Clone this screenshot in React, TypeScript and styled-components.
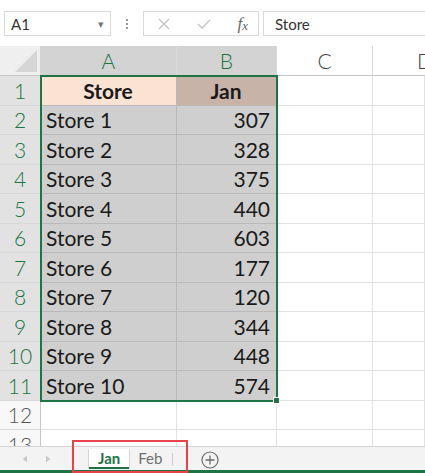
import React from 'react';
import styled, { createGlobalStyle, css } from 'styled-components';

const GlobalStyle = createGlobalStyle`
  html, body { margin: 0; padding: 0; background: #ffffff; }
  body { font-family: Lato, "Liberation Sans", sans-serif; }
`;

const green = '#217346';

const rows: [string, number][] = [
  ['Store 1', 307],
  ['Store 2', 328],
  ['Store 3', 375],
  ['Store 4', 440],
  ['Store 5', 603],
  ['Store 6', 177],
  ['Store 7', 120],
  ['Store 8', 344],
  ['Store 9', 448],
  ['Store 10', 574],
];

const App = () => {
  return (
    <>
      <GlobalStyle />
      <Window>
        <FormulaBar>
          <NameBox>
            <span>A1</span>
            <Caret>▾</Caret>
          </NameBox>
          <Dots>
            <i />
            <i />
            <i />
          </Dots>
          <FxButtons>
            <svg width="14" height="14" viewBox="0 0 14 14">
              <path d="M2 2 L12 12 M12 2 L2 12" stroke="#c4c4c4" strokeWidth="1.4" fill="none" />
            </svg>
            <svg width="16" height="14" viewBox="0 0 16 14">
              <path d="M2 7 L6 11 L14 3" stroke="#c4c4c4" strokeWidth="1.4" fill="none" />
            </svg>
            <Fx>
              f<sub>x</sub>
            </Fx>
          </FxButtons>
          <FormulaInput>Store</FormulaInput>
        </FormulaBar>

        <Sheet>
          <Corner>
            <CornerTriangle />
          </Corner>
          <ColHead selected>A</ColHead>
          <ColHead selected>B</ColHead>
          <ColHead>C</ColHead>
          <ColHead last>D</ColHead>

          <RowHead selected>1</RowHead>
          <Cell tone="peach" bold center>
            Store
          </Cell>
          <Cell tone="brown" bold center>
            Jan
          </Cell>
          <Cell />
          <Cell />

          {rows.map(([name, value], i) => (
            <React.Fragment key={name}>
              <RowHead selected>{i + 2}</RowHead>
              <Cell tone="gray">{name}</Cell>
              <Cell tone="gray" right>
                {value}
              </Cell>
              <Cell />
              <Cell />
            </React.Fragment>
          ))}

          <RowHead>12</RowHead>
          <Cell />
          <Cell />
          <Cell />
          <Cell />
          <RowHead>13</RowHead>
          <Cell />
          <Cell />
          <Cell />
          <Cell />

          <Selection>
            <FillHandle />
          </Selection>
        </Sheet>

        <TabBar>
          <Arrows>
            <svg width="6" height="8" viewBox="0 0 6 8">
              <path d="M5 0.5 L0.8 4 L5 7.5 Z" fill="#c9c9c9" />
            </svg>
            <svg width="6" height="8" viewBox="0 0 6 8">
              <path d="M1 0.5 L5.2 4 L1 7.5 Z" fill="#c9c9c9" />
            </svg>
          </Arrows>
          <Tabs>
            <Tab active>Jan</Tab>
            <Tab>Feb</Tab>
            <TabSep />
          </Tabs>
          <AddSheet>
            <svg width="18" height="18" viewBox="0 0 18 18">
              <circle cx="9" cy="9" r="8" stroke="#6d6d6d" strokeWidth="1.2" fill="none" />
              <path d="M9 4.5 V13.5 M4.5 9 H13.5" stroke="#6d6d6d" strokeWidth="1.3" />
            </svg>
          </AddSheet>
        </TabBar>
        <StatusLine />
      </Window>
    </>
  );
};

export default App;

// Styles
const Window = styled.div`
  width: 425px;
  height: 473px;
  overflow: hidden;
  background: #ffffff;
  display: flex;
  flex-direction: column;
`;

const FormulaBar = styled.div`
  height: 46px;
  box-sizing: border-box;
  padding: 11px 0 0 4px;
  display: flex;
  align-items: flex-start;
  background: #ffffff;
  flex-shrink: 0;
`;

const boxBorder = css`
  box-sizing: border-box;
  height: 25px;
  border: 1px solid #d9d9d9;
  background: #ffffff;
`;

const NameBox = styled.div`
  ${boxBorder};
  width: 107px;
  display: flex;
  align-items: center;
  justify-content: space-between;
  padding: 0 6px 0 6px;
  font-size: 15px;
  color: #333333;
`;

const Caret = styled.span`
  font-size: 11px;
  color: #777777;
`;

const Dots = styled.div`
  width: 32px;
  height: 25px;
  display: flex;
  flex-direction: column;
  align-items: center;
  justify-content: center;
  gap: 2px;

  i {
    width: 2px;
    height: 2px;
    background: #9a9a9a;
    display: block;
  }
`;

const FxButtons = styled.div`
  ${boxBorder};
  width: 116px;
  display: flex;
  align-items: center;
  padding: 0 10px 0 13px;
  justify-content: space-between;
`;

const Fx = styled.span`
  font-family: 'Liberation Serif', serif;
  font-style: italic;
  font-size: 17px;
  color: #666666;
  sub {
    font-size: 13px;
    vertical-align: -1px;
  }
`;

const FormulaInput = styled.div`
  ${boxBorder};
  margin-left: 4px;
  flex: 1;
  border-right: none;
  display: flex;
  align-items: center;
  padding-left: 11px;
  font-size: 15px;
  color: #333333;
`;

const Sheet = styled.div`
  position: relative;
  display: grid;
  grid-template-columns: 41px 136px 100px 96px 52px;
  grid-template-rows: 30px repeat(12, 29.5px) 30px;
  flex: 1;
  overflow: hidden;
`;

const Corner = styled.div`
  background: #efefef;
  border-right: 1px solid #d4d4d4;
  border-bottom: 1px solid #c6c6c6;
  position: relative;
`;

const CornerTriangle = styled.div`
  position: absolute;
  right: 3px;
  bottom: 3px;
  width: 0;
  height: 0;
  border-left: 22px solid transparent;
  border-bottom: 22px solid #d6d6d6;
`;

const ColHead = styled.div<{ selected?: boolean; last?: boolean }>`
  box-sizing: border-box;
  display: flex;
  align-items: center;
  justify-content: center;
  font-size: 21px;
  font-weight: 300;
  border-bottom: 1px solid #c6c6c6;
  border-right: ${(p) => (p.last ? 'none' : '1px solid #d9d9d9')};
  background: ${(p) => (p.selected ? '#d3d3d3' : '#ffffff')};
  color: ${(p) => (p.selected ? green : '#444444')};
  ${(p) =>
    p.last &&
    css`
      justify-content: flex-start;
      padding-left: 44px;
    `};
`;

const RowHead = styled.div<{ selected?: boolean }>`
  box-sizing: border-box;
  display: flex;
  align-items: center;
  justify-content: center;
  font-size: 21px;
  font-weight: 300;
  border-right: 1px solid #c6c6c6;
  border-bottom: 1px solid #d9d9d9;
  background: ${(p) => (p.selected ? '#e2e2e2' : '#f8f8f8')};
  color: ${(p) => (p.selected ? green : '#555555')};
`;

const tones = {
  peach: '#fbe3d4',
  brown: '#c8b3a8',
  gray: '#cfcfcf',
  white: '#ffffff',
};

const Cell = styled.div<{
  tone?: keyof typeof tones;
  bold?: boolean;
  center?: boolean;
  right?: boolean;
}>`
  box-sizing: border-box;
  display: flex;
  align-items: center;
  padding: 0 6px 0 5px;
  font-size: 21px;
  color: #1a1a1a;
  background: ${(p) => tones[p.tone || 'white']};
  border-right: 1px solid ${(p) => (p.tone ? '#b9b9b9' : '#e2e2e2')};
  border-bottom: 1px solid ${(p) => (p.tone ? '#b9b9b9' : '#e2e2e2')};
  font-weight: ${(p) => (p.bold ? 700 : 400)};
  justify-content: ${(p) => (p.center ? 'center' : p.right ? 'flex-end' : 'flex-start')};
`;

const Selection = styled.div`
  position: absolute;
  left: 40px;
  top: 29px;
  width: 238px;
  height: 327px;
  box-sizing: border-box;
  border: 2px solid ${green};
  pointer-events: none;
`;

const FillHandle = styled.div`
  position: absolute;
  right: -4px;
  bottom: -4px;
  width: 5px;
  height: 5px;
  background: ${green};
  border: 1px solid #ffffff;
`;

const TabBar = styled.div`
  height: 24px;
  flex-shrink: 0;
  box-sizing: border-box;
  background: #f3f3f3;
  border-top: 1px solid #d4d4d4;
  display: flex;
  align-items: stretch;
  position: relative;
`;

const Arrows = styled.div`
  width: 72px;
  display: flex;
  align-items: center;
  gap: 17px;
  padding-left: 22px;
  box-sizing: border-box;
`;

const Tabs = styled.div`
  display: flex;
  align-items: stretch;
  padding-left: 15px;
  width: 116px;
  box-sizing: border-box;
  position: relative;
  margin-top: -7px;
  height: 33px;
  border: 2px solid #e8434a;
  padding-top: 7px;
  padding-bottom: 2px;
`;

const Tab = styled.div<{ active?: boolean }>`
  box-sizing: border-box;
  padding: 0 9px;
  display: flex;
  align-items: center;
  font-size: 15px;
  font-weight: ${(p) => (p.active ? 700 : 400)};
  color: ${(p) => (p.active ? green : '#6f6f6f')};
  background: ${(p) => (p.active ? '#ffffff' : 'transparent')};
  border-bottom: ${(p) => (p.active ? `2px solid ${green}` : '2px solid transparent')};
  box-shadow: ${(p) => (p.active ? '1px 0 0 #d4d4d4, -1px 0 0 #d4d4d4' : 'none')};
`;

const TabSep = styled.div`
  width: 1px;
  background: #c8c8c8;
  margin: 4px 0 4px 1px;
`;

const AddSheet = styled.div`
  display: flex;
  align-items: center;
  padding-left: 13px;
  padding-top: 2px;
`;

const StatusLine = styled.div`
  height: 3px;
  flex-shrink: 0;
  background: ${green};
`;
